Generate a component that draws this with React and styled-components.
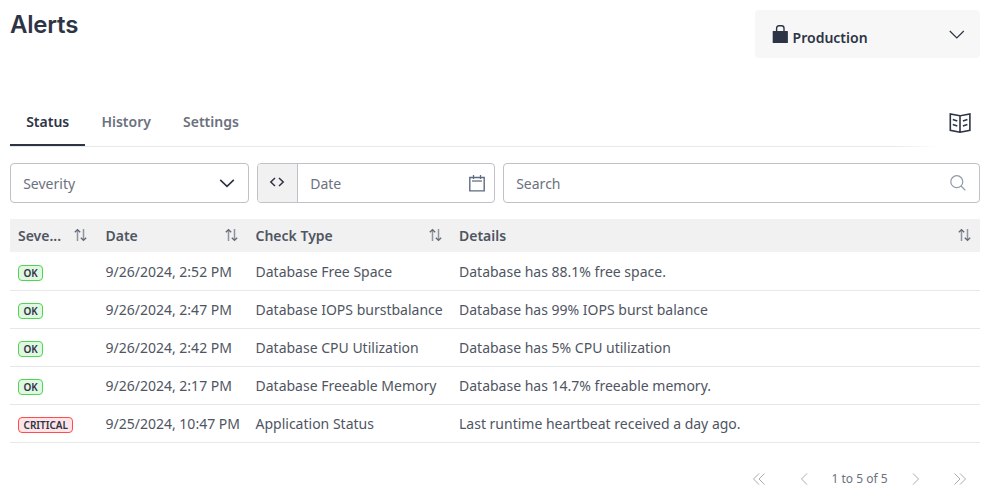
import React from "react";
import styled, { createGlobalStyle, css } from "styled-components";

const GlobalStyle = createGlobalStyle`
  *, *::before, *::after { box-sizing: border-box; }
  body {
    margin: 0;
    background: #fff;
    color: #4f5562;
    font-family: "Noto Sans", "Open Sans", sans-serif;
    font-size: 14px;
    line-height: 20px;
  }
  button { font: inherit; color: inherit; background: none; border: 0; padding: 0; }
  svg { display: block; flex: none; }
`;

const Page = styled.main`
  width: 990px;
  height: 495px;
  padding: 10px 10px 0;
  overflow: hidden;
`;

const Header = styled.header`
  display: flex;
  justify-content: space-between;
  align-items: flex-start;
  height: 88px;
`;

const Title = styled.h1`
  margin: 0;
  color: #2d3445;
  font: 600 24px/30px Inter, sans-serif;
  letter-spacing: -0.2px;
`;

const EnvironmentSelect = styled.button`
  display: flex;
  align-items: center;
  gap: 4px;
  width: 225px;
  height: 48px;
  padding: 0 15px 0 17px;
  border-radius: 4px;
  background: #f7f7f7;
  color: #2d3445;
  font-weight: 600;
`;

const EnvironmentName = styled.span`
  flex: 1;
  padding: 7px 0 0 0.6px;
  text-align: left;
`;

const TabBar = styled.nav`
  display: flex;
  height: 49px;
  background: linear-gradient(90deg, #e6e7e8 0, #e6e7e8 880px, transparent 930px) 0 100% / 100% 1px no-repeat;
`;

const Tab = styled.button`
  height: 48px;
  padding: 2px 16px 0 16.15px;
  color: ${(p) => (p.$active ? "#2d3445" : "#6c717e")};
  font-weight: 600;
  border-bottom: 2px solid ${(p) => (p.$active ? "#2d3445" : "transparent")};
`;

const GuideButton = styled.button`
  margin: 14px 8px 0 auto;
  height: 24px;
  color: #2d3445;
`;

const Filters = styled.div`
  display: grid;
  grid-template-columns: 239px 238px 1fr;
  gap: 8px;
  margin-top: 16px;
`;

const Field = styled.div`
  display: flex;
  align-items: center;
  height: 40px;
  padding-right: ${(p) => p.$endSpace}px;
  border: 1px solid #bfc1c6;
  border-radius: 4px;
  color: #6c717e;
  overflow: hidden;
`;

const Placeholder = styled.span`
  flex: 1;
  padding: 2px 0 0 12.2px;
`;

const OperatorButton = styled.button`
  display: flex;
  justify-content: center;
  width: 40px;
  height: 38px;
  padding: 13px 1px 0 0;
  border-right: 1px solid #bfc1c6;
  background: #f1f1f1;
  color: #2d3445;
`;

const columns = css`
  display: grid;
  grid-template-columns: 87.5px 150px 203.5px 1fr;
`;

const Table = styled.section`
  margin-top: 16px;
`;

const HeadRow = styled.div`
  ${columns}
  height: 33px;
  margin-bottom: 1px;
  background: #f1f1f1;
  font-weight: 600;
`;

const HeadCell = styled.div`
  display: flex;
  align-items: center;
  justify-content: space-between;
  min-width: 0;
  padding: 1px 9.5px 0 8px;

  &:first-child { padding-right: 10.5px; }
  svg { margin-bottom: 2px; }
`;

const Row = styled.div`
  ${columns}
  height: 38px;
  border-bottom: 1px solid #e6e7e8;
`;

const Cell = styled.div`
  display: flex;
  align-items: center;
  padding: 1px 8px 0;
  white-space: nowrap;
`;

const Badge = styled.span`
  height: 16px;
  margin-top: 1px;
  padding: 0 4.5px;
  border: 1px solid ${(p) => (p.$tone === "critical" ? "#ff4d4d" : "#4fd650")};
  border-radius: 4px;
  background: ${(p) => (p.$tone === "critical" ? "#ffe4e7" : "#e0f8e2")};
  color: #2d3445;
  font-size: 10px;
  font-weight: 600;
  line-height: 15px;
`;

const Pagination = styled.footer`
  display: flex;
  justify-content: flex-end;
  align-items: center;
  height: 20px;
  margin-top: 26px;
  padding-right: 13px;
  color: #6c717e;
  font-size: 12px;
`;

const PageButton = styled.button`
  color: #a9acb4;
`;

const PageRange = styled.span`
  margin: 0 24.4px 0 23.6px;
`;

const FirstPage = styled(PageButton)`
  margin-right: 34px;
`;

const LastPage = styled(PageButton)`
  margin-left: 33px;
`;

const Stroke = ({ w, h, d, sw = 1.2, color = "currentColor" }) => (
  <svg width={w} height={h} viewBox={`0 0 ${w} ${h}`} fill="none" stroke={color} strokeWidth={sw}>
    <path d={d} />
  </svg>
);

const LockIcon = () => (
  <svg width="16" height="20" viewBox="0 0 16 20">
    <path d="M4.6 8V4.3Q4.6 1.7 7 1.7H9.6Q12 1.7 12 4.3V8" fill="none" stroke="currentColor" strokeWidth="1.4" />
    <rect x="0.7" y="7" width="15.2" height="12" rx="0.5" fill="currentColor" />
  </svg>
);

const BookIcon = () => (
  <Stroke w={24} h={24} sw={1.6} d="M12 3.8L2.3 1.9V18.3L12 20.2L21.9 18.3V1.9L12 3.8V20.2M4.8 7.6L9.3 9M4.8 12.6L9.3 13.9M19.4 7.6L14.9 9M19.4 12.6L14.9 13.9" />
);

const SortIcon = () => (
  <svg width="13" height="14" viewBox="0 0 13 14" fill="none">
    <path d="M3.5 2V13M9.5 1V12" stroke="#9093a0" strokeWidth="1.5" />
    <path d="M0.8 4.2L3.5 1.7L6.2 4.2M6.8 9.8L9.5 12.3L12.2 9.8" stroke="#666b78" strokeWidth="1.4" />
  </svg>
);

const CalendarIcon = () => (
  <svg width="16" height="17" viewBox="0 0 16 17" fill="none" stroke="#5f6b80">
    <path d="M0.8 2.5H15.2V15.9H0.8Z" strokeWidth="1.4" />
    <path d="M3 6H13" stroke="#7d8592" strokeWidth="1.6" />
    <path d="M4.5 0V4M11.5 0V4" strokeWidth="1.3" />
  </svg>
);

const SearchIcon = () => (
  <svg width="16" height="16" viewBox="0 0 16 16" fill="none" stroke="#8f9aa8" strokeWidth="1.2">
    <circle cx="6.8" cy="6.7" r="6" />
    <path d="M11.1 11L15.4 15.3" />
  </svg>
);

const HEADINGS = ["Seve...", "Date", "Check Type", "Details"];

const ALERTS = [
  ["OK", "9/26/2024, 2:52 PM", "Database Free Space", "Database has 88.1% free space."],
  ["OK", "9/26/2024, 2:47 PM", "Database IOPS burstbalance", "Database has 99% IOPS burst balance"],
  ["OK", "9/26/2024, 2:42 PM", "Database CPU Utilization", "Database has 5% CPU utilization"],
  ["OK", "9/26/2024, 2:17 PM", "Database Freeable Memory", "Database has 14.7% freeable memory."],
  ["CRITICAL", "9/25/2024, 10:47 PM", "Application Status", "Last runtime heartbeat received a day ago."],
];

export default function App() {
  return (
    <Page>
      <GlobalStyle />
      <Header>
        <Title>Alerts</Title>
        <EnvironmentSelect>
          <LockIcon />
          <EnvironmentName>Production</EnvironmentName>
          <Stroke w={17} h={12} d="M1.8 3L8.8 10L15.8 3" />
        </EnvironmentSelect>
      </Header>
      <TabBar>
        <Tab $active>Status</Tab>
        <Tab>History</Tab>
        <Tab>Settings</Tab>
        <GuideButton aria-label="Guide"><BookIcon /></GuideButton>
      </TabBar>
      <Filters>
        <Field $endSpace={13}>
          <Placeholder>Severity</Placeholder>
          <Stroke w={16} h={10} sw={1.6} color="#2d3445" d="M1.2 1.8L8 8.3L14.8 1.8" />
        </Field>
        <Field $endSpace={9}>
          <OperatorButton>
            <Stroke w={16} h={11} sw={1.5} d="M6 1L1.8 5L6 9M10 1L14.2 5L10 9" />
          </OperatorButton>
          <Placeholder>Date</Placeholder>
          <CalendarIcon />
        </Field>
        <Field $endSpace={13}>
          <Placeholder>Search</Placeholder>
          <SearchIcon />
        </Field>
      </Filters>
      <Table>
        <HeadRow>
          {HEADINGS.map((heading) => (
            <HeadCell key={heading}>{heading}<SortIcon /></HeadCell>
          ))}
        </HeadRow>
        {ALERTS.map(([severity, date, check, details]) => (
          <Row key={date}>
            <Cell><Badge $tone={severity.toLowerCase()}>{severity}</Badge></Cell>
            <Cell>{date}</Cell>
            <Cell>{check}</Cell>
            <Cell>{details}</Cell>
          </Row>
        ))}
      </Table>
      <Pagination>
        <FirstPage aria-label="First page"><Stroke w={14} h={12} sw={1} d="M7 0.5L1.5 6L7 11.5M12.5 0.5L7 6L12.5 11.5" /></FirstPage>
        <PageButton aria-label="Previous page"><Stroke w={8} h={12} sw={1} d="M7 0.5L1.5 6L7 11.5" /></PageButton>
        <PageRange>1 to 5 of 5</PageRange>
        <PageButton aria-label="Next page"><Stroke w={8} h={12} sw={1} d="M1 0.5L6.5 6L1 11.5" /></PageButton>
        <LastPage aria-label="Last page"><Stroke w={14} h={12} sw={1} d="M1.5 0.5L7 6L1.5 11.5M7 0.5L12.5 6L7 11.5" /></LastPage>
      </Pagination>
    </Page>
  );
}
